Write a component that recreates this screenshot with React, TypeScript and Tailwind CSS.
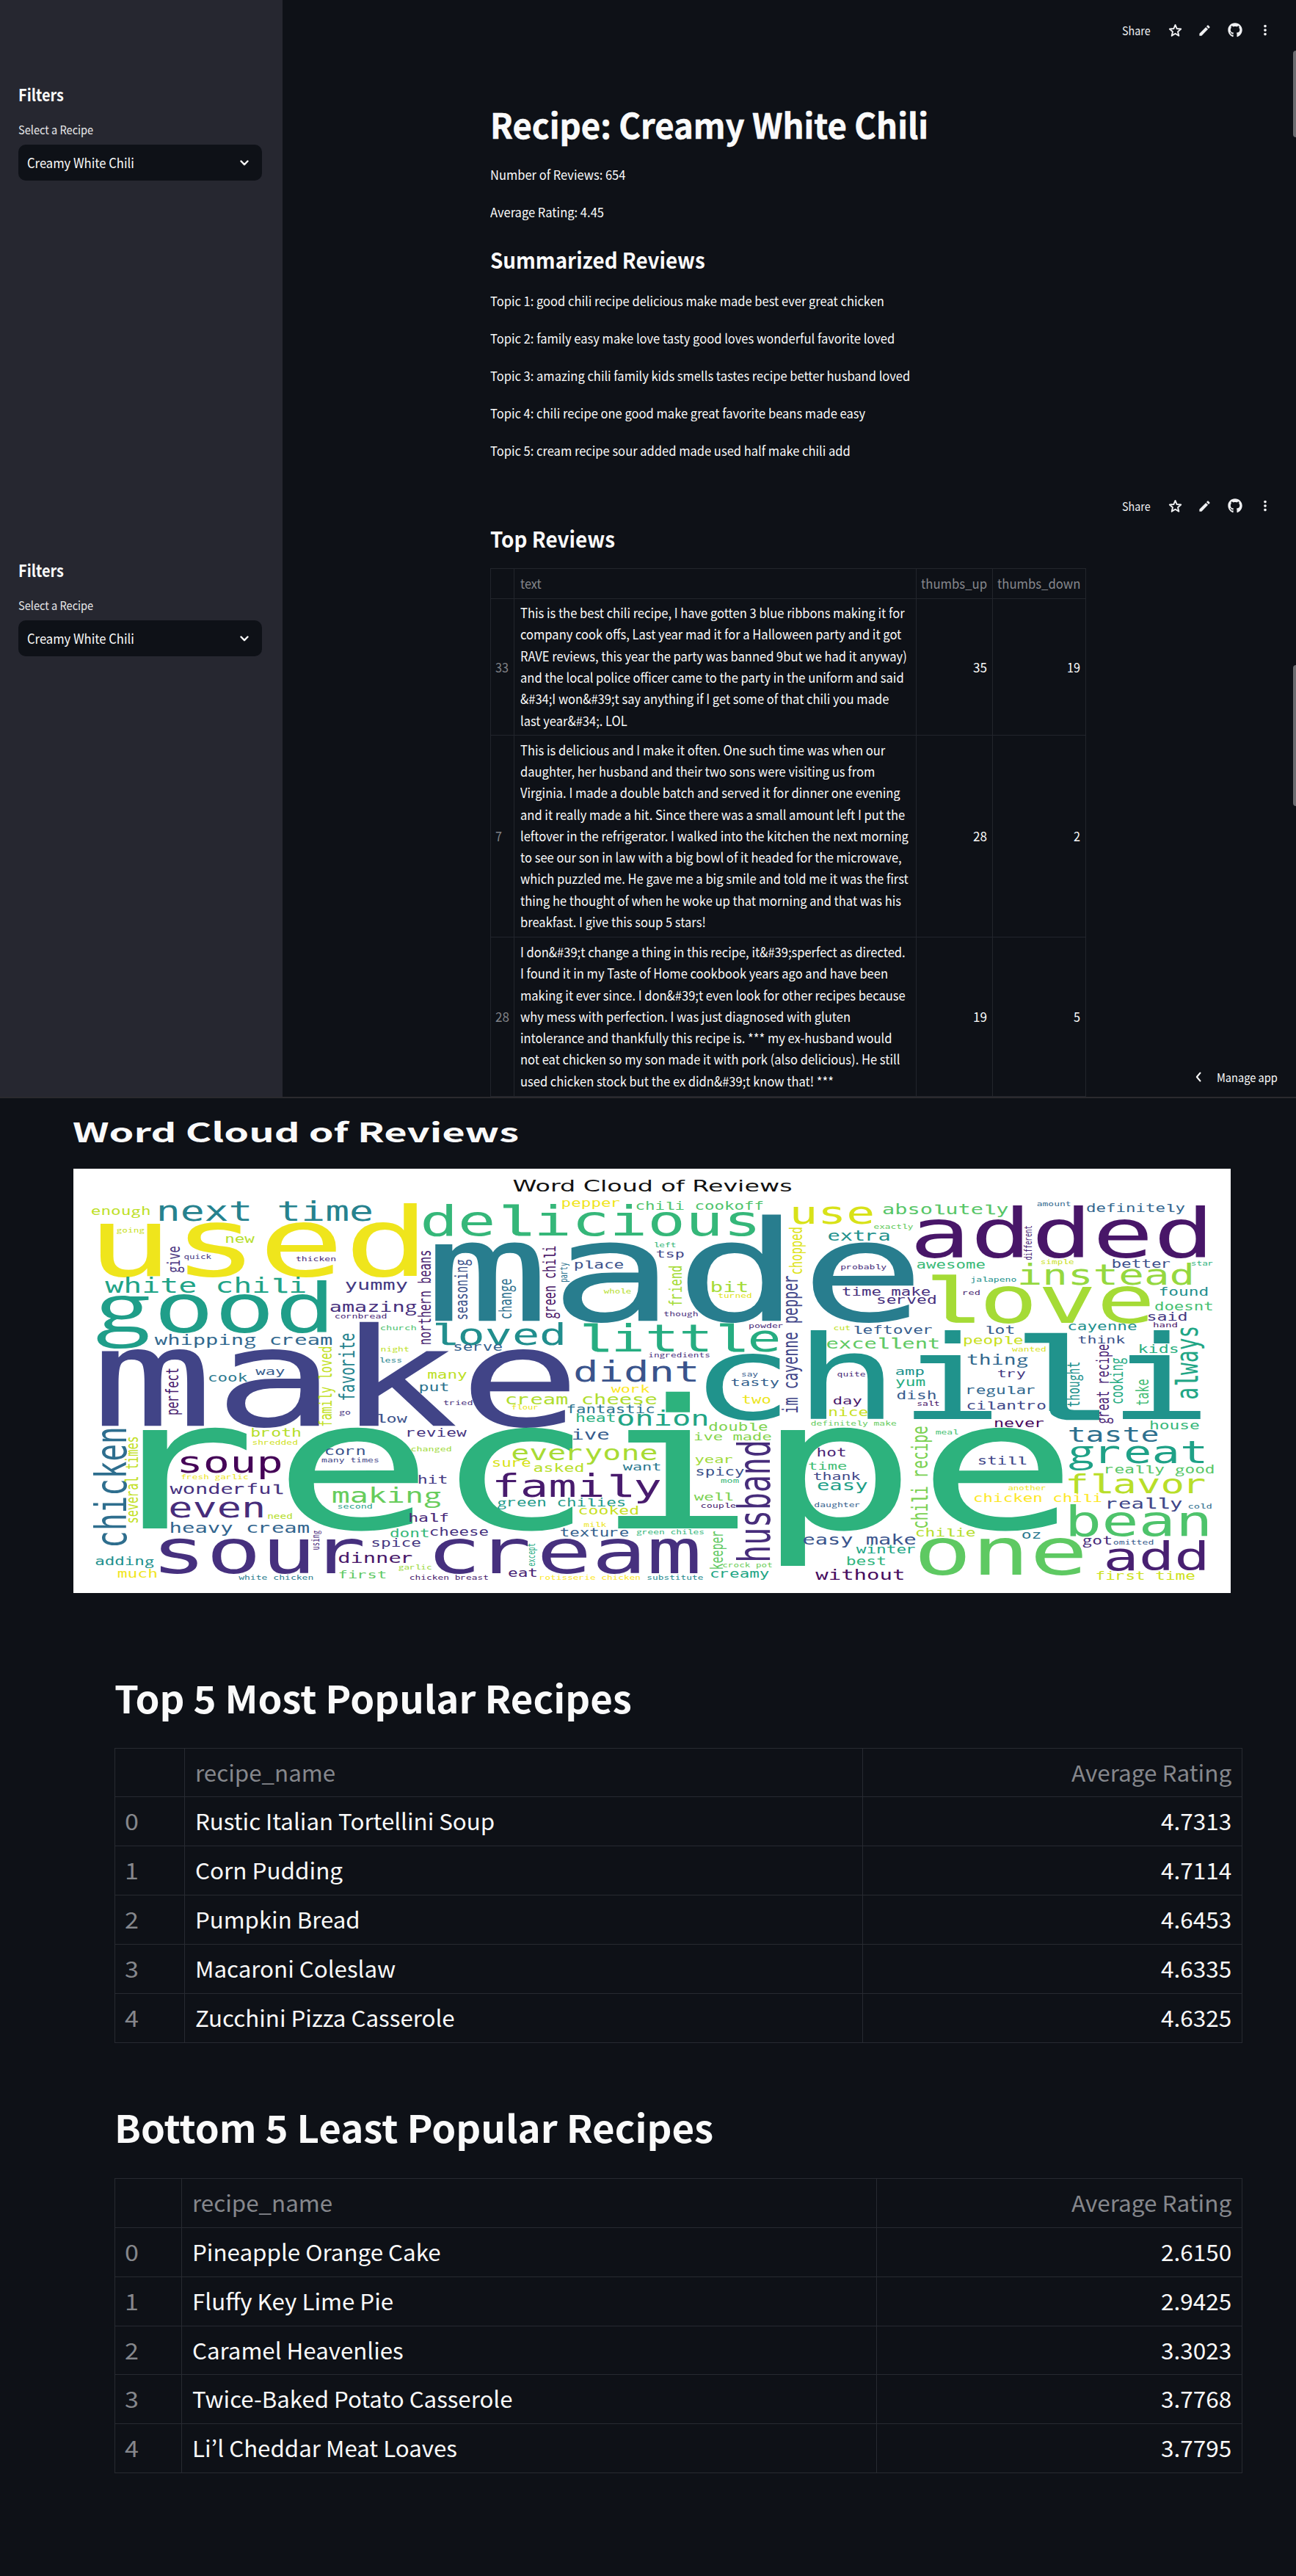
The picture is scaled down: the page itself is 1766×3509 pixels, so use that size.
import { useLayoutEffect, useRef, useState, type ReactNode } from "react";
import { MdEdit, MdMoreVert } from "react-icons/md";
import { FaGithub } from "react-icons/fa";

/** A line (or block) of text condensed or widened to an exact width. */
function Fit({ w, right = false, children }: { w: number; right?: boolean; children: ReactNode }) {
  const ref = useRef<HTMLSpanElement>(null);
  const [scale, setScale] = useState(1);
  useLayoutEffect(() => {
    if (ref.current) setScale(w / ref.current.offsetWidth);
  }, [w]);
  return (
    <span
      ref={ref}
      className={right ? "inline-block shrink-0 origin-right whitespace-pre" : "inline-block shrink-0 origin-left whitespace-pre"}
      style={{ transform: `scaleX(${scale})` }}
    >
      {children}
    </span>
  );
}

function Toolbar() {
  return (
    <div className="flex h-[51px] items-end justify-end pr-[31px] text-[#f0f1f3]">
      <div className="flex h-5 items-center">
        <span className="mr-[23px] flex w-[39px] text-[16.5px] leading-5">
          <Fit w={39}>Share</Fit>
        </span>
        <svg viewBox="0 0 24 24" className="mr-[20px] size-[21px]" fill="none" stroke="currentColor" strokeWidth="2.2" strokeLinejoin="round">
          <path d="M12 3.4 14.5 9.2 20.8 9.8 16 14 17.5 20.2 12 16.9 6.5 20.2 8 14 3.2 9.8 9.5 9.2Z" />
        </svg>
        <MdEdit className="mr-[22px] size-[19px]" />
        <FaGithub className="mr-[20px] size-[20px]" />
        <MdMoreVert className="size-[22px]" />
      </div>
    </div>
  );
}

function Sidebar() {
  return (
    <aside className="w-[385px] shrink-0 bg-[#262730] pl-[25px] pt-[112px]">
      <h2 className="flex text-[22.5px] font-semibold leading-8">
        <Fit w={62}>Filters</Fit>
      </h2>
      <div className="mt-[20px] flex text-[16px] leading-6 text-[#e8e8ea]">
        <Fit w={102}>Select a Recipe</Fit>
      </div>
      <div className="mt-[9px] flex h-[49px] w-[332px] items-center justify-between rounded-[10px] bg-[#0e1117] pl-3 pr-[18px] text-[18px]">
        <Fit w={146}>Creamy White Chili</Fit>
        <svg viewBox="0 0 12 8" className="h-2 w-3" fill="none" stroke="#fafafa" strokeWidth="2.4" strokeLinecap="round" strokeLinejoin="round">
          <path d="M1.5 1.5 6 6.2 10.5 1.5" />
        </svg>
      </div>
    </aside>
  );
}

const topics: [string, number][] = [
  ["Topic 1: good chili recipe delicious make made best ever great chicken", 537],
  ["Topic 2: family easy make love tasty good loves wonderful favorite loved", 551],
  ["Topic 3: amazing chili family kids smells tastes recipe better husband loved", 572],
  ["Topic 4: chili recipe one good make great favorite beans made easy", 511],
  ["Topic 5: cream recipe sour added made used half make chili add", 491],
];

const reviews = [
  {
    id: "33", idW: 18, h: "h-[186px]", up: "35", down: "19", downW: 18, w: 527,
    text: `This is the best chili recipe, I have gotten 3 blue ribbons making it for
company cook offs, Last year mad it for a Halloween party and it got
RAVE reviews, this year the party was banned 9but we had it anyway)
and the local police officer came to the party in the uniform and said
&#34;I won&#39;t say anything if I get some of that chili you made
last year&#34;. LOL`,
  },
  {
    id: "7", idW: 9, h: "h-[275px]", up: "28", down: "2", downW: 9, w: 529,
    text: `This is delicious and I make it often. One such time was when our
daughter, her husband and their two sons were visiting us from
Virginia. I made a double batch and served it for dinner one evening
and it really made a hit. Since there was a small amount left I put the
leftover in the refrigerator. I walked into the kitchen the next morning
to see our son in law with a big bowl of it headed for the microwave,
which puzzled me. He gave me a big smile and told me it was the first
thing he thought of when he woke up that morning and that was his
breakfast. I give this soup 5 stars!`,
  },
  {
    id: "28", idW: 19, h: "h-[217px]", up: "19", down: "5", downW: 9, w: 525,
    text: `I don&#39;t change a thing in this recipe, it&#39;sperfect as directed.
I found it in my Taste of Home cookbook years ago and have been
making it ever since. I don&#39;t even look for other recipes because
why mess with perfection. I was just diagnosed with gluten
intolerance and thankfully this recipe is. *** my ex-husband would
not eat chicken so my son made it with pork (also delicious). He still
used chicken stock but the ex didn&#39;t know that! ***`,
  },
];

const line = "border-[#22252c]";

function ReviewTable() {
  const cols = "grid grid-cols-[32px_548px_104px_127px] w-[812px]";
  return (
    <div className={`mt-[21px] w-[812px] border-l border-t ${line} text-[18px]`}>
      <div className={`${cols} h-[41px] text-[#85878c]`}>
        <div className={`border-b border-r ${line}`} />
        <div className={`flex items-center border-b border-r pb-0.5 pl-[8px] ${line}`}><Fit w={29}>text</Fit></div>
        <div className={`flex items-center justify-end border-b border-r pb-0.5 pr-[7px] ${line}`}><Fit w={90} right>thumbs_up</Fit></div>
        <div className={`flex items-center justify-end border-b border-r pb-0.5 pr-[7px] ${line}`}><Fit w={113} right>thumbs_down</Fit></div>
      </div>
      {reviews.map((r) => (
        <div key={r.id} className={`${cols} ${r.h}`}>
          <div className={`flex items-center border-b border-r pb-px pl-[6px] text-[#808287] ${line}`}><Fit w={r.idW}>{r.id}</Fit></div>
          <div className={`flex items-center border-b border-r pb-px pl-[8px] leading-[29.33px] ${line}`}><Fit w={r.w}>{r.text}</Fit></div>
          <div className={`flex items-center justify-end border-b border-r pb-px pr-[7px] ${line}`}><Fit w={19} right>{r.up}</Fit></div>
          <div className={`flex items-center justify-end border-b border-r pb-px pr-[7px] ${line}`}><Fit w={r.downW} right>{r.down}</Fit></div>
        </div>
      ))}
    </div>
  );
}

/* ---------- Word cloud ---------- */

// [word, start, end, baseline, colour]; upright words run bottom (start) to top (end).
type Word = [string, number, number, number, string];
interface Tile { ox: number; oy: number; kx: number; across: Word[]; upright: Word[] }

const tiles: Tile[] = [
  {
    ox: 90, oy: 1580, kx: 2.8,
    across: [
      ["next time", 357, 1163, 250, "#26828e"], ["enough", 97, 317, 226, "#bddf26"],
      ["used", 130, 1337, 474, "#efe51c"], ["going", 192, 297, 297, "#c8e020"],
      ["new", 610, 718, 338, "#b5de2b"], ["quick", 450, 553, 406, "#453781"],
      ["thicken", 877, 1026, 413, "#482677"], ["white chili", 148, 910, 544, "#20a386"],
      ["yummy", 1066, 1300, 530, "#443983"], ["good", 118, 992, 706, "#1f9e89"],
      ["amazing", 1008, 1335, 622, "#472f7d"], ["cornbread", 1026, 1220, 648, "#482576"],
      ["whipping cream", 337, 1012, 756, "#31688e"], ["church", 1200, 1333, 695, "#4ac16d"],
      ["night", 1202, 1305, 783, "#bddf26"], ["less", 1198, 1278, 828, "#25848e"],
      ["make", 133, 1920, 1087, "#414487"], ["cook", 545, 690, 905, "#2a788e"],
      ["way", 722, 832, 878, "#365c8d"], ["many", 1380, 1527, 893, "#bddf26"],
    ],
    upright: [
      ["give", 460, 355, 433, "#46327e"], ["northern beans", 752, 372, 1390, "#481d6f"],
      ["family loved", 1087, 765, 1012, "#c2df23"], ["favorite", 980, 710, 1100, "#25848e"],
      ["perfect", 1040, 853, 427, "#481c6e"],
    ],
  },
  {
    ox: 550, oy: 1580, kx: 2.8,
    across: [
      ["made", 117, 1945, 658, "#287d8e"], ["delicious", 75, 1340, 308, "#35b779"],
      ["pepper", 605, 822, 192, "#f1e51d"], ["chili cookoff", 888, 1368, 205, "#4ec36b"],
      ["place", 653, 836, 445, "#3b528b"], ["left", 957, 1035, 358, "#35b779"],
      ["tsp", 965, 1067, 400, "#404588"], ["whole", 762, 865, 545, "#b5de2b"],
      ["bit", 1175, 1308, 540, "#a5db36"], ["turned", 1200, 1325, 564, "#dfe318"],
      ["though", 993, 1120, 640, "#472d7b"], ["loved", 123, 605, 755, "#218e8d"],
      ["serve", 193, 373, 780, "#34618d"], ["little", 688, 1427, 782, "#26ad81"],
      ["powder", 1318, 1445, 686, "#482878"], ["ingredients", 935, 1165, 807, "#472c7a"],
      ["didnt", 655, 1113, 907, "#3a548c"], ["say", 1290, 1350, 886, "#365c8d"],
      ["tasty", 1250, 1430, 925, "#34618d"], ["use", 1487, 1786, 260, "#d8e219"],
      ["chili", 1153, 3040, 1060, "#20938c"],
    ],
    upright: [
      ["seasoning", 650, 408, 243, "#3b528b"], ["change", 647, 487, 409, "#2d718e"],
      ["green chili", 647, 353, 577, "#481467"], ["party", 498, 420, 624, "#2c728e"],
      ["friend", 595, 435, 1060, "#a5db36"], ["im cayenne pepper", 1032, 475, 1503, "#404588"],
      ["chopped", 465, 278, 1518, "#dde318"],
    ],
  },
  {
    ox: 1100, oy: 1580, kx: 2.613,
    across: [
      ["absolutely", 270, 713, 222, "#56c667"], ["amount", 818, 935, 189, "#31688e"],
      ["definitely", 995, 1342, 213, "#32658e"], ["exactly", 237, 375, 282, "#65cb5e"],
      ["extra", 75, 290, 330, "#21918c"], ["added", 385, 1415, 400, "#481668"],
      ["probably", 120, 280, 448, "#472d7b"], ["awesome", 390, 630, 443, "#38b977"],
      ["simple", 832, 947, 427, "#cae11f"], ["better", 1087, 1290, 440, "#3c4f8a"],
      ["star", 1368, 1442, 432, "#2db27d"], ["jalapeno", 583, 742, 499, "#21918c"],
      ["instead", 758, 1365, 510, "#95d840"], ["love", 447, 1218, 666, "#a5db36"],
      ["red", 555, 612, 553, "#481f70"], ["time make", 125, 435, 554, "#472f7d"],
      ["served", 250, 455, 588, "#46307e"], ["found", 1255, 1423, 554, "#218f8d"],
      ["doesnt", 1238, 1440, 616, "#44bf70"], ["said", 1213, 1348, 658, "#453882"],
      ["hand", 1233, 1315, 683, "#481467"], ["cut", 95, 150, 697, "#c0df25"],
      ["leftover", 168, 442, 710, "#365c8d"], ["lot", 638, 733, 710, "#365c8d"],
      ["cayenne", 930, 1170, 695, "#218f8d"], ["think", 965, 1130, 749, "#3b528b"],
      ["people", 558, 765, 753, "#c8e020"], ["excellent", 70, 465, 772, "#5ec962"],
      ["wanted", 728, 847, 783, "#d8e219"], ["kids", 1183, 1317, 788, "#29af7f"],
      ["thing", 570, 783, 838, "#31688e"], ["try", 678, 775, 887, "#453882"],
      ["quite", 107, 205, 885, "#482878"], ["amp", 315, 413, 878, "#20928c"],
      ["yum", 315, 417, 923, "#26ad81"],
    ],
    upright: [
      ["different", 408, 270, 798, "#482475"], ["always", 975, 685, 1388, "#21a685"],
      ["great recipe", 1077, 755, 1073, "#482475"], ["cooking", 995, 810, 1122, "#25ab82"],
      ["thought", 1008, 828, 968, "#21918c"], ["take", 1002, 898, 1213, "#3fbc73"],
    ],
  },
  {
    ox: 90, oy: 1870, kx: 2.8,
    across: [
      ["recipe", 290, 3802, 636, "#2db27d"], ["sour cream", 358, 2408, 818, "#46307e"],
      ["put", 1350, 1455, 75, "#2c728e"], ["tried", 1440, 1548, 133, "#472e7c"],
      ["low", 1190, 1300, 203, "#3b528b"], ["go", 1042, 1083, 172, "#46327e"],
      ["review", 1303, 1527, 260, "#463480"], ["broth", 708, 892, 262, "#b5de2b"],
      ["shredded", 712, 880, 293, "#d0e11c"], ["soup", 437, 817, 408, "#450457"],
      ["fresh garlic", 440, 692, 435, "#ece51b"], ["corn", 990, 1137, 335, "#3a548c"],
      ["many times", 975, 1190, 367, "#414487"], ["changed", 1317, 1467, 321, "#a0da39"],
      ["wonderful", 395, 825, 496, "#46307e"], ["hit", 1345, 1450, 454, "#453882"],
      ["making", 1017, 1427, 530, "#67cc5c"], ["second", 1037, 1165, 556, "#1fa187"],
      ["even", 398, 747, 590, "#472d7b"], ["need", 770, 860, 596, "#b5de2b"],
      ["heavy cream", 400, 925, 653, "#32658e"], ["half", 1310, 1455, 610, "#482878"],
      ["dont", 1237, 1380, 673, "#35b779"], ["cheese", 1390, 1608, 665, "#46327e"],
      ["spice", 1168, 1350, 711, "#453781"], ["dinner", 1040, 1318, 778, "#481769"],
      ["garlic", 1268, 1392, 803, "#9bd93c"], ["adding", 112, 333, 787, "#21908d"],
      ["much", 197, 343, 838, "#f1e51d"], ["white chicken", 657, 940, 845, "#287c8e"],
      ["first", 1042, 1217, 841, "#5ec962"], ["chicken breast", 1312, 1608, 845, "#481b6d"],
    ],
    upright: [
      ["chicken", 705, 230, 228, "#2e6e8e"], ["several times", 612, 263, 272, "#c2df23"],
      ["using", 722, 645, 965, "#482878"],
    ],
  },
  {
    ox: 550, oy: 1870, kx: 2.8,
    across: [
      ["work", 790, 937, 80, "#fde725"], ["cream cheese", 392, 962, 128, "#b0dd2f"],
      ["flour", 413, 510, 150, "#eae51a"], ["fantastic", 625, 953, 165, "#2c738e"],
      ["heat", 660, 803, 200, "#2ab07f"], ["onion", 818, 1155, 217, "#21a585"],
      ["two", 1292, 1397, 125, "#ece51b"], ["ive", 645, 780, 274, "#365c8d"],
      ["double", 1165, 1385, 238, "#7fd34e"], ["ive made", 1110, 1400, 277, "#84d44b"],
      ["everyone", 415, 962, 358, "#a8db34"], ["sure", 340, 482, 385, "#d8e219"],
      ["asked", 497, 683, 406, "#b8de29"], ["want", 835, 977, 400, "#2a788e"],
      ["year", 1112, 1252, 369, "#a0da39"], ["spicy", 1117, 1297, 421, "#3b528b"],
      ["mom", 1210, 1277, 449, "#35b779"], ["family", 352, 977, 507, "#481b6d"],
      ["green chilies", 357, 842, 545, "#1f9a8a"], ["cooked", 670, 892, 578, "#c8e020"],
      ["well", 1107, 1253, 523, "#7ad151"], ["couple", 1135, 1265, 551, "#481b6d"],
      ["milk", 687, 772, 629, "#ece51b"], ["texture", 598, 855, 669, "#34618d"],
      ["green chiles", 888, 1143, 661, "#32b67a"], ["eat", 400, 505, 833, "#482475"],
      ["rotisserie chicken", 520, 900, 845, "#fde725"], ["substitute", 930, 1140, 845, "#23898e"],
      ["crock pot", 1218, 1403, 795, "#6ccd5a"], ["creamy", 1172, 1392, 836, "#21a585"],
    ],
    upright: [
      ["husband", 765, 285, 1397, "#472d7b"], ["keeper", 800, 648, 1217, "#5ec962"],
      ["except", 790, 698, 500, "#25ab82"],
    ],
  },
  {
    ox: 1100, oy: 1870, kx: 2.613,
    across: [
      ["regular", 570, 808, 87, "#31688e"], ["cilantro", 570, 847, 150, "#3f4889"],
      ["dish", 320, 455, 109, "#365c8d"], ["salt", 392, 467, 136, "#481467"],
      ["day", 93, 192, 130, "#481769"], ["nice", 78, 213, 177, "#c8e020"],
      ["definitely make", 13, 315, 215, "#65cb5e"], ["never", 668, 840, 223, "#46085c"],
      ["meal", 457, 535, 253, "#44bf70"], ["house", 1222, 1393, 231, "#35b779"],
      ["taste", 932, 1245, 282, "#2d708e"], ["great", 932, 1410, 370, "#1fa187"],
      ["hot", 37, 133, 342, "#482374"], ["time", 5, 137, 395, "#3fbc73"],
      ["thank", 22, 187, 437, "#3f4889"], ["easy", 37, 212, 481, "#1f9f88"],
      ["daughter", 25, 185, 548, "#34618d"], ["still", 610, 777, 376, "#404588"],
      ["really good", 1063, 1445, 410, "#56c667"], ["flavor", 930, 1413, 491, "#b8de29"],
      ["another", 715, 847, 480, "#ece51b"], ["chicken chili", 595, 1045, 529, "#fde725"],
      ["really", 1070, 1332, 555, "#404688"], ["cold", 1357, 1437, 556, "#2e6d8e"],
      ["bean", 935, 1423, 667, "#4ec36b"], ["chilie", 388, 595, 669, "#b5de2b"],
      ["oz", 765, 828, 677, "#2a788e"], ["easy make", -14, 383, 703, "#3a548c"],
      ["winter", 173, 382, 739, "#21a685"], ["best", 142, 275, 786, "#2fb47c"],
      ["without", 28, 340, 845, "#470d60"], ["one", 400, 978, 824, "#5ec962"],
      ["got", 980, 1080, 702, "#472c7a"], ["omitted", 1090, 1230, 702, "#365c8d"],
      ["add", 1065, 1413, 808, "#482071"], ["first time", 1030, 1377, 845, "#cde11d"],
    ],
    upright: [["chili recipe", 633, 220, 427, "#7ad151"]],
  },
];

const STRETCH = 1.51;
const CELL = 0.602;
const FACE: Record<string, string> = { g: "Open Sans", l: "Liberation Mono" };
const SHIFT: Record<string, number> = { g: 0.03, r: -0.06 };

/** Ink edges of a letter inside its cell, in em. */
const inkCache = new Map<string, [number, number]>();
const probe = document.createElement("canvas").getContext("2d")!;
function ink(ch: string): [number, number] {
  const known = inkCache.get(ch);
  if (known) return known;
  probe.font = `200px "${FACE[ch] ?? "DejaVu Sans Mono"}"`;
  const m = probe.measureText(ch);
  const shift = SHIFT[ch] ?? 0;
  const edges: [number, number] = [-m.actualBoundingBoxLeft / 200 + shift, m.actualBoundingBoxRight / 200 + shift];
  inkCache.set(ch, edges);
  return edges;
}

function CloudWord({ word, x, y, length, color, upright }: { word: string; x: number; y: number; length: number; color: string; upright?: boolean }) {
  const left = ink(word[0])[0];
  const right = ink(word[word.length - 1])[1];
  const em = length / ((word.length - 1) * CELL + right - left);
  const size = em / (upright ? 1 : STRETCH);
  const cell = size * CELL;
  const transform = upright
    ? `translate(${x} ${y + left * em}) scale(${STRETCH} 1) rotate(-90)`
    : `translate(${x - left * em} ${y}) scale(${STRETCH} 1.015)`;
  return (
    <text transform={transform} fontSize={size} fill={color} fontFamily="'DejaVu Sans Mono', monospace">
      {[...word].map((ch, i) =>
        ch === " " ? null : ch === "g" ? (
          <tspan key={i} x={i * cell + size * SHIFT.g} fontFamily="'Open Sans'">g</tspan>
        ) : ch === "l" ? (
          <tspan key={i} x={i * cell} fontFamily="'Liberation Mono'" stroke={color} strokeWidth={size * 0.015}>l</tspan>
        ) : (
          <tspan key={i} x={i * cell + size * (SHIFT[ch] ?? 0)}>{ch}</tspan>
        ),
      )}
    </text>
  );
}

function WordCloud() {
  return (
    <svg viewBox="99.5 1592 1577.5 577.5" className="ml-[99.5px] mt-[29px] block h-[577.5px] w-[1577.5px] bg-white">
      <text x="698" y="1622.5" fontSize="22" textLength="381" lengthAdjust="spacingAndGlyphs" fill="#111" fontFamily="'DejaVu Sans', sans-serif">
        Word Cloud of Reviews
      </text>
      {tiles.map((t, n) => (
        <g key={n}>
          {t.across.map(([word, a, b, base, color]) => (
            <CloudWord key={word} word={word} x={t.ox + a / t.kx} y={t.oy + base / 3} length={(b - a) / t.kx} color={color} />
          ))}
          {t.upright.map(([word, a, b, base, color]) => (
            <CloudWord key={word} upright word={word} x={t.ox + base / t.kx} y={t.oy + a / 3} length={(a - b) / 3} color={color} />
          ))}
        </g>
      ))}
    </svg>
  );
}

/* ---------- Ranking tables ---------- */

type Ranked = [string, number, string];

const top5: Ranked[] = [
  ["Rustic Italian Tortellini Soup", 409, "4.7313"],
  ["Corn Pudding", 202, "4.7114"],
  ["Pumpkin Bread", 226, "4.6453"],
  ["Macaroni Coleslaw", 274, "4.6335"],
  ["Zucchini Pizza Casserole", 355, "4.6325"],
];
const bottom5: Ranked[] = [
  ["Pineapple Orange Cake", 340, "2.6150"],
  ["Fluffy Key Lime Pie", 275, "2.9425"],
  ["Caramel Heavenlies", 289, "3.3023"],
  ["Twice-Baked Potato Casserole", 438, "3.7768"],
  ["Li’l Cheddar Meat Loaves", 362, "3.7795"],
];

function RankTable({ rows, cols }: { rows: Ranked[]; cols: string }) {
  const cell = "flex items-center border-b border-r border-[#272a31]";
  return (
    <div className="w-[1537px] border-l border-t border-[#272a31] text-[30.5px]">
      <div className={`${cols} h-[66.9px] text-[#85878c]`}>
        <div className={cell} />
        <div className={`${cell} pl-[14px]`}><Fit w={191}>recipe_name</Fit></div>
        <div className={`${cell} justify-end pr-[14px]`}><Fit w={218} right>Average Rating</Fit></div>
      </div>
      {rows.map(([name, w, rating], i) => (
        <div key={name} className={`${cols} h-[66.9px]`}>
          <div className={`${cell} pl-[13px] text-[#85878c]`}><Fit w={19}>{i}</Fit></div>
          <div className={`${cell} pl-[14px]`}><Fit w={w - 1}>{name}</Fit></div>
          <div className={`${cell} justify-end pr-[14px]`}><Fit w={96} right>{rating}</Fit></div>
        </div>
      ))}
    </div>
  );
}

export default function App() {
  return (
    <div className="h-[3509px] w-[1766px] overflow-hidden bg-[#0e1117] font-['Noto_Sans_CJK_JP','Noto_Sans_CJK_SC',sans-serif] text-[#fafafa]">
      <section className="relative flex h-[648px]">
        <Sidebar />
        <main className="flex-1">
          <Toolbar />
          <div className="pl-[283px]">
            <h1 className="mt-[88px] flex text-[47px] font-bold leading-[60px] [-webkit-text-stroke:0.6px_#fafafa]"><Fit w={597}>Recipe: Creamy White Chili</Fit></h1>
            <div className="mt-[25px] flex text-[17.5px] leading-7"><Fit w={184}>Number of Reviews: 654</Fit></div>
            <div className="mt-[23px] flex text-[17.5px] leading-7"><Fit w={155}>Average Rating: 4.45</Fit></div>
            <h2 className="mt-[30px] flex text-[29.5px] font-semibold leading-10"><Fit w={293}>Summarized Reviews</Fit></h2>
            <div className="mt-[23px] flex flex-col gap-[23px] text-[17.5px] leading-7">
              {topics.map(([t, w]) => (
                <div key={t} className="flex"><Fit w={w}>{t}</Fit></div>
              ))}
            </div>
          </div>
        </main>
        <div className="absolute right-0 top-[69px] h-[118px] w-[4px] rounded-l-sm bg-[#6b6c70]" />
      </section>

      <section className="relative flex h-[848px] overflow-hidden border-b-2 border-[#2b2a2e]">
        <Sidebar />
        <main className="flex-1">
          <Toolbar />
          <div className="pl-[283px]">
            <h2 className="mt-[14px] flex text-[29.5px] font-semibold leading-10"><Fit w={170}>Top Reviews</Fit></h2>
            <ReviewTable />
          </div>
        </main>
        <div className="absolute bottom-[17px] right-[25px] flex h-5 items-center gap-[21px] text-[16px] leading-5">
          <svg viewBox="0 0 8 14" className="h-3.5 w-2" fill="none" stroke="#fafafa" strokeWidth="2" strokeLinecap="round" strokeLinejoin="round">
            <path d="M6.5 1.5 1.8 7l4.7 5.5" />
          </svg>
          <span className="flex w-[83px]"><Fit w={83}>Manage app</Fit></span>
        </div>
        <div className="absolute right-0 top-[258px] h-[192px] w-[4px] rounded-l-sm bg-[#6b6c70]" />
      </section>

      <section>
        <h2 className="ml-[99px] mt-[22px] flex text-[36px] font-semibold leading-[44px]"><Fit w={608}>Word Cloud of Reviews</Fit></h2>
        <div className="pt-px">
          <WordCloud />
        </div>
      </section>

      <section className="pl-[156px]">
        <h2 className="mt-[112px] flex text-[51px] font-semibold leading-[60px]"><Fit w={705}>Top 5 Most Popular Recipes</Fit></h2>
        <div className="mt-[39px]"><RankTable rows={top5} cols="grid grid-cols-[95px_924px_517px]" /></div>
        <h2 className="mt-[84px] flex text-[51px] font-semibold leading-[60px]"><Fit w={816}>Bottom 5 Least Popular Recipes</Fit></h2>
        <div className="mt-[40px]"><RankTable rows={bottom5} cols="grid grid-cols-[91px_947px_498px]" /></div>
      </section>
    </div>
  );
}
